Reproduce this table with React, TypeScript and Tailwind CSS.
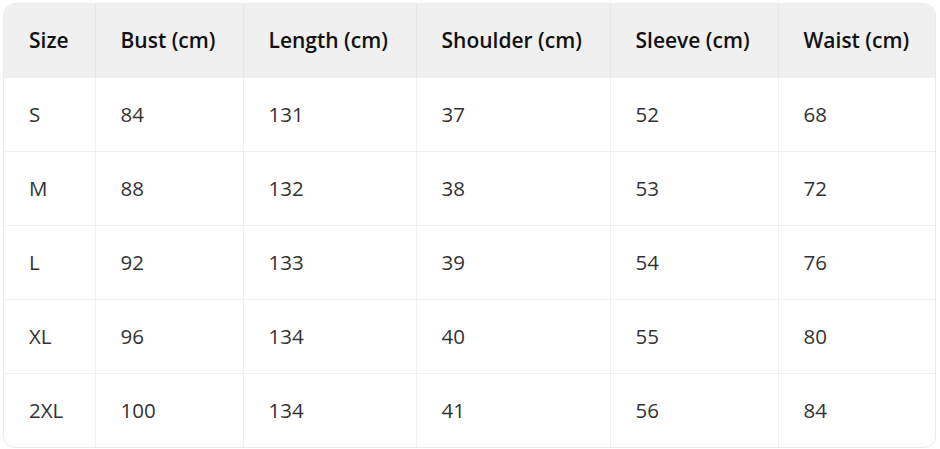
const columns = [
  { label: "Size", width: "w-[91px]" },
  { label: "Bust (cm)", width: "w-[148px]" },
  { label: "Length (cm)", width: "w-[173px]" },
  { label: "Shoulder (cm)", width: "w-[194px]" },
  { label: "Sleeve (cm)", width: "w-[168px]" },
  { label: "Waist (cm)", width: "w-[159px]" },
];

const rows = [
  ["S", "84", "131", "37", "52", "68"],
  ["M", "88", "132", "38", "53", "72"],
  ["L", "92", "133", "39", "54", "76"],
  ["XL", "96", "134", "40", "55", "80"],
  ["2XL", "100", "134", "41", "56", "84"],
];

export default function App() {
  return (
    <div className="w-[940px] h-[449px] bg-white p-[3px] font-['Open_Sans',sans-serif]">
      <div className="w-[933px] rounded-[12px] border border-[#ebebeb] overflow-hidden">
        <table className="w-full border-collapse table-fixed">
          <thead>
            <tr className="bg-[#f0f0f0] h-[73px]">
              {columns.map((c, i) => (
                <th
                  key={c.label}
                  className={`${c.width} text-left pl-[25px] text-[21px] font-semibold text-[#111] ${
                    i > 0 ? "border-l border-[#e6e6e6]" : ""
                  }`}
                >
                  {c.label}
                </th>
              ))}
            </tr>
          </thead>
          <tbody>
            {rows.map((r) => (
              <tr key={r[0]} className="h-[74px] border-t border-[#efefef]">
                {r.map((v, i) => (
                  <td
                    key={i}
                    className={`pl-[25px] text-[20.5px] text-[#333] ${
                      i > 0 ? "border-l border-[#efefef]" : ""
                    }`}
                  >
                    {v}
                  </td>
                ))}
              </tr>
            ))}
          </tbody>
        </table>
      </div>
    </div>
  );
}
